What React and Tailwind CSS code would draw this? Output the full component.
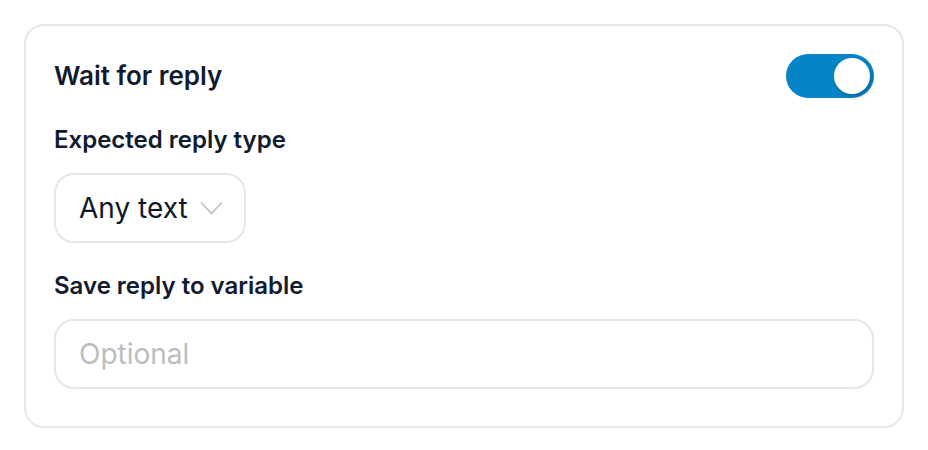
export default function App() {
  return (
    <div className="w-[928px] h-[450px] bg-white p-6" style={{ fontFamily: "Inter, 'Noto Sans', sans-serif" }}>
      <div className="w-[880px] h-[404px] rounded-[20px] border-2 border-[#e6e6ea] px-[28px] pt-[28px] flex flex-col">
        <div className="flex items-center justify-between h-[44px]">
          <span className="text-[26px] font-semibold text-[#111a2e] leading-[32px]">Wait for reply</span>
          <div className="w-[88px] h-[44px] rounded-full bg-[#0784c6] flex items-center justify-end pr-[4px]">
            <div className="w-[36px] h-[36px] rounded-full bg-white shadow-[2px_3px_5px_rgba(0,0,0,0.18)]" />
          </div>
        </div>
        <div className="mt-[26px] text-[24px] font-semibold text-[#111a2e] leading-[32px]">Expected reply type</div>
        <div className="mt-[17px] flex">
          <div className="flex items-center h-[70px] rounded-[20px] border-2 border-[#e6e6ea] pl-[23px] pr-[21px] gap-[12px]">
            <span className="text-[28px] text-[#0f172a]">Any text</span>
            <svg width="23" height="14" viewBox="0 0 23 14" fill="none">
              <path d="M1 1.5 L11.5 12.5 L22 1.5" stroke="#c2c2c6" strokeWidth="1.7" />
            </svg>
          </div>
        </div>
        <div className="mt-[27px] text-[24px] font-semibold text-[#111a2e] leading-[32px]">Save reply to variable</div>
        <div className="mt-[17px] h-[70px] rounded-[20px] border-2 border-[#e6e6ea] flex items-center pl-[23px]">
          <span className="text-[28px] text-[#bcbcbc]">Optional</span>
        </div>
      </div>
    </div>
  );
}
